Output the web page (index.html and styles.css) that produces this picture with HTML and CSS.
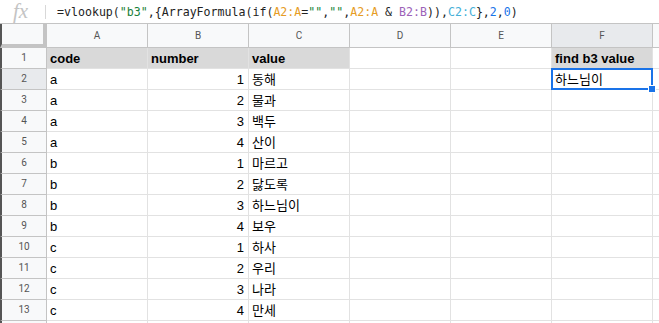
FILE: index.html
```html
<!DOCTYPE html>
<html lang="ko">
<head>
    <meta charset="UTF-8">
    <title>vlookup</title>
    <link rel="stylesheet" href="styles.css">
</head>
<body>
    <div class="formula-bar">
        <span class="fx">fx</span>
        <span class="sep"></span>
        <div class="formula">=vlookup(<span class="str">"b3"</span>,{ArrayFormula(if(<span class="ref-a">A2:A</span>=<span class="str">""</span>,<span class="str">""</span>,<span class="ref-a">A2:A</span> &amp; <span class="ref-b">B2:B</span>)),<span class="ref-c">C2:C</span>},<span class="num">2</span>,<span class="num">0</span>)</div>
    </div>

    <div class="grid">
        <div class="corner"></div>
        <div class="col-head">A</div>
        <div class="col-head">B</div>
        <div class="col-head">C</div>
        <div class="col-head">D</div>
        <div class="col-head">E</div>
        <div class="col-head active">F</div>
        <div class="col-head"></div>

        <div class="row-head">1</div>
        <div class="cell head">code</div>
        <div class="cell head">number</div>
        <div class="cell head">value</div>
        <div class="cell"></div>
        <div class="cell"></div>
        <div class="cell head">find b3 value</div>
        <div class="cell"></div>

        <div class="row-head active">2</div>
        <div class="cell">a</div>
        <div class="cell num">1</div>
        <div class="cell">동해</div>
        <div class="cell"></div>
        <div class="cell"></div>
        <div class="cell selected">하느님이<span class="sel-box"></span><span class="sel-handle"></span></div>
        <div class="cell"></div>

        <div class="row-head">3</div>
        <div class="cell">a</div>
        <div class="cell num">2</div>
        <div class="cell">물과</div>
        <div class="cell"></div><div class="cell"></div><div class="cell"></div><div class="cell"></div>

        <div class="row-head">4</div>
        <div class="cell">a</div>
        <div class="cell num">3</div>
        <div class="cell">백두</div>
        <div class="cell"></div><div class="cell"></div><div class="cell"></div><div class="cell"></div>

        <div class="row-head">5</div>
        <div class="cell">a</div>
        <div class="cell num">4</div>
        <div class="cell">산이</div>
        <div class="cell"></div><div class="cell"></div><div class="cell"></div><div class="cell"></div>

        <div class="row-head">6</div>
        <div class="cell">b</div>
        <div class="cell num">1</div>
        <div class="cell">마르고</div>
        <div class="cell"></div><div class="cell"></div><div class="cell"></div><div class="cell"></div>

        <div class="row-head">7</div>
        <div class="cell">b</div>
        <div class="cell num">2</div>
        <div class="cell">닳도록</div>
        <div class="cell"></div><div class="cell"></div><div class="cell"></div><div class="cell"></div>

        <div class="row-head">8</div>
        <div class="cell">b</div>
        <div class="cell num">3</div>
        <div class="cell">하느님이</div>
        <div class="cell"></div><div class="cell"></div><div class="cell"></div><div class="cell"></div>

        <div class="row-head">9</div>
        <div class="cell">b</div>
        <div class="cell num">4</div>
        <div class="cell">보우</div>
        <div class="cell"></div><div class="cell"></div><div class="cell"></div><div class="cell"></div>

        <div class="row-head">10</div>
        <div class="cell">c</div>
        <div class="cell num">1</div>
        <div class="cell">하사</div>
        <div class="cell"></div><div class="cell"></div><div class="cell"></div><div class="cell"></div>

        <div class="row-head">11</div>
        <div class="cell">c</div>
        <div class="cell num">2</div>
        <div class="cell">우리</div>
        <div class="cell"></div><div class="cell"></div><div class="cell"></div><div class="cell"></div>

        <div class="row-head">12</div>
        <div class="cell">c</div>
        <div class="cell num">3</div>
        <div class="cell">나라</div>
        <div class="cell"></div><div class="cell"></div><div class="cell"></div><div class="cell"></div>

        <div class="row-head">13</div>
        <div class="cell">c</div>
        <div class="cell num">4</div>
        <div class="cell">만세</div>
        <div class="cell"></div><div class="cell"></div><div class="cell"></div><div class="cell"></div>

        <div class="row-head"></div>
        <div class="cell"></div><div class="cell"></div><div class="cell"></div>
        <div class="cell"></div><div class="cell"></div><div class="cell"></div><div class="cell"></div>
    </div>
</body>
</html>
```

FILE: styles.css
```css
body {
    margin: 0;
    width: 659px;
    height: 323px;
    overflow: hidden;
    background: #fff;
    font-family: "Liberation Sans", "Noto Sans CJK KR", sans-serif;
}
.formula-bar {
    display: flex;
    align-items: center;
    height: 23px;
    border-bottom: 1px solid #c4c4c4;
}
.fx {
    width: 45px;
    padding-left: 13px;
    box-sizing: border-box;
    font-family: "Liberation Serif", serif;
    font-style: italic;
    font-size: 21px;
    color: #c4c4c4;
    line-height: 23px;
}
.sep {
    width: 1px;
    height: 14px;
    background: #d8d8d8;
}
.formula {
    padding-left: 11px;
    font-family: "DejaVu Sans Mono", monospace;
    font-size: 11.6px;
    color: #222;
    white-space: pre;
}
.str { color: #188038; }
.ref-a { color: #e69c24; }
.ref-b { color: #9c62b8; }
.ref-c { color: #46b0d8; }
.num { color: #1a73e8; }

.grid {
    display: grid;
    grid-template-columns: 47px repeat(6, 101px) 1fr;
    grid-template-rows: 24px;
    grid-auto-rows: 21px;
}
.corner {
    background: #f8f9fa;
    border-left: 2px solid #555;
    border-right: 4px solid #c4c4c4;
    border-bottom: 4px solid #c4c4c4;
    box-sizing: border-box;
}
.col-head {
    background: #f8f9fa;
    border-right: 1px solid #c4c4c4;
    border-bottom: 1px solid #c4c4c4;
    font-family: Roboto, sans-serif;
    font-size: 10px;
    color: #555;
    text-align: center;
    line-height: 23px;
}
.row-head {
    background: #f8f9fa;
    border-left: 2px solid #555;
    border-right: 1px solid #c4c4c4;
    border-bottom: 1px solid #c4c4c4;
    font-family: Roboto, sans-serif;
    font-size: 10px;
    color: #555;
    text-align: center;
    line-height: 20px;
}
.col-head.active, .row-head.active {
    background: #e8eaed;
}
.cell {
    position: relative;
    border-right: 1px solid #e2e2e2;
    border-bottom: 1px solid #e2e2e2;
    padding: 0 3px;
    font-size: 13px;
    line-height: 21px;
    color: #000;
    white-space: nowrap;
}
.cell.head {
    background: #d9d9d9;
    font-weight: bold;
}
.cell.num {
    text-align: right;
    padding-right: 4px;
    color: #000;
}
.cell.selected {
    z-index: 2;
}
.sel-box {
    position: absolute;
    left: -1px;
    top: -1px;
    width: 102px;
    height: 22px;
    border: 2px solid #1a73e8;
    box-sizing: border-box;
}
.sel-handle {
    position: absolute;
    left: 97px;
    top: 17px;
    width: 6px;
    height: 6px;
    background: #1a73e8;
    box-shadow: 0 0 0 1px #fff;
}
```
